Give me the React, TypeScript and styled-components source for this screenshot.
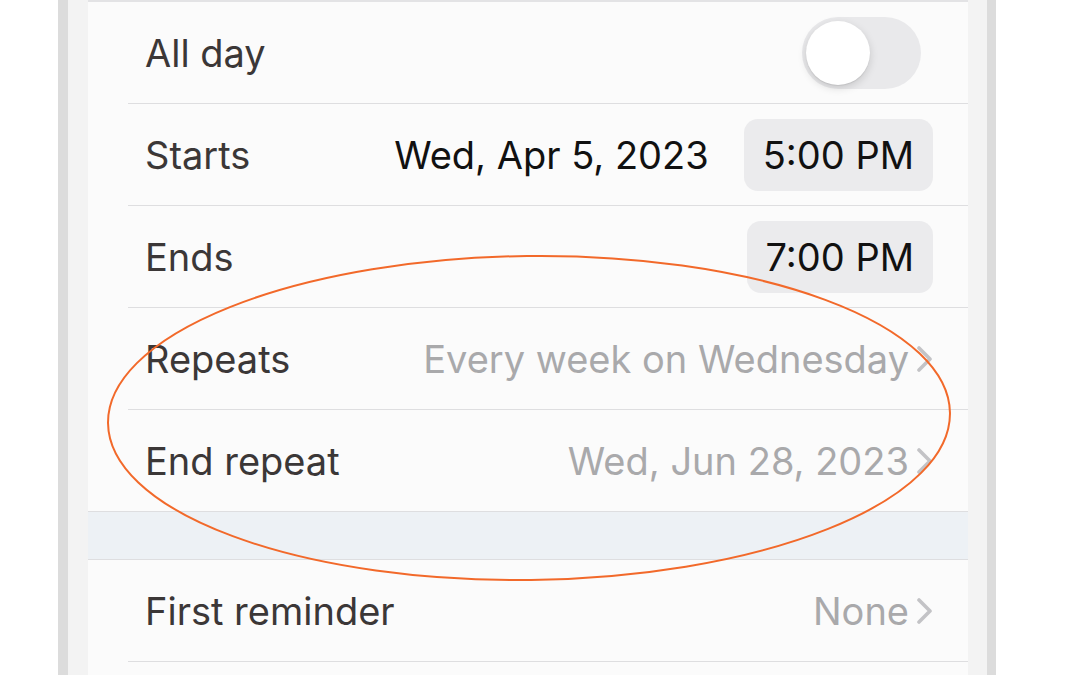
import React from "react";
import styled, { createGlobalStyle } from "styled-components";

const GlobalStyle = createGlobalStyle`
  html, body {
    margin: 0;
    padding: 0;
    background: #ffffff;
    overflow: hidden;
  }
  body {
    font-family: Inter, "Noto Sans", "Liberation Sans", sans-serif;
  }
`;

const Page = styled.div`
  position: relative;
  width: 1080px;
  height: 675px;
  overflow: hidden;
  background: #ffffff;
`;

const Phone = styled.div`
  margin-left: 58px;
  width: 938px;
  height: 675px;
  border-left: 10px solid #dcdcdc;
  border-right: 9px solid #dcdcdc;
  background: #f3f3f3;
  padding: 0 19px 0 20px;
  box-sizing: border-box;
`;

const Panel = styled.div`
  height: 100%;
  background: #fbfbfb;
  border-top: 2px solid #e3e3e5;
  display: flex;
  flex-direction: column;
`;

const Row = styled.div`
  height: 101px;
  flex: none;
  display: flex;
  align-items: center;
  justify-content: space-between;
  padding: 0 35px 0 57px;
  box-sizing: border-box;
`;

const Separator = styled.div`
  height: 1px;
  flex: none;
  margin-left: 40px;
  background: #dedee0;
`;

const Label = styled.span`
  font-size: 38px;
  color: #3b3737;
`;

const Right = styled.div`
  display: flex;
  align-items: center;
  gap: 35px;
`;

const DateText = styled.span`
  font-size: 38px;
  color: #111111;
`;

const Pill = styled.span`
  height: 72px;
  display: flex;
  align-items: center;
  padding: 0 19px;
  border-radius: 14px;
  background: #ebebed;
  font-size: 38px;
  color: #111111;
`;

const Value = styled.span`
  display: flex;
  align-items: center;
  gap: 7px;
  font-size: 38px;
  color: #a9a9ab;
`;

const Track = styled.div`
  width: 119px;
  height: 72px;
  margin-right: 12px;
  border-radius: 36px;
  background: #e9e9eb;
  padding: 4px;
  box-sizing: border-box;
  display: flex;
  align-items: center;
`;

const Knob = styled.div`
  width: 64px;
  height: 64px;
  border-radius: 50%;
  background: #ffffff;
  box-shadow: 0 3px 8px rgba(0, 0, 0, 0.15), 0 1px 1px rgba(0, 0, 0, 0.08);
`;

const SectionGap = styled.div`
  height: 47px;
  flex: none;
  background: #edf1f5;
  border-top: 1px solid #dedee0;
  border-bottom: 1px solid #dedee0;
`;

const Marker = styled.svg`
  position: absolute;
  left: 0;
  top: 0;
  pointer-events: none;
`;

const Chevron = () => (
  <svg width="17" height="26" viewBox="0 0 17 26">
    <path d="M3 2 L14 13 L3 24" fill="none" stroke="#c3c3c6" strokeWidth="3.6" strokeLinecap="round" strokeLinejoin="round" />
  </svg>
);

export default function App() {
  return (
    <Page>
      <GlobalStyle />
      <Phone>
        <Panel>
          <Row>
            <Label>All day</Label>
            <Track>
              <Knob />
            </Track>
          </Row>
          <Separator />
          <Row>
            <Label>Starts</Label>
            <Right>
              <DateText>Wed, Apr 5, 2023</DateText>
              <Pill>5:00 PM</Pill>
            </Right>
          </Row>
          <Separator />
          <Row>
            <Label>Ends</Label>
            <Pill>7:00 PM</Pill>
          </Row>
          <Separator />
          <Row>
            <Label>Repeats</Label>
            <Value>
              Every week on Wednesday
              <Chevron />
            </Value>
          </Row>
          <Separator />
          <Row>
            <Label>End repeat</Label>
            <Value>
              Wed, Jun 28, 2023
              <Chevron />
            </Value>
          </Row>
          <SectionGap />
          <Row>
            <Label>First reminder</Label>
            <Value>
              None
              <Chevron />
            </Value>
          </Row>
          <Separator />
          <Row />
        </Panel>
      </Phone>
      <Marker width="1080" height="675" viewBox="0 0 1080 675">
        <ellipse cx="529" cy="418" rx="421" ry="162" fill="none" stroke="#f2692a" strokeWidth="2" transform="rotate(-0.7 529 418)" />
      </Marker>
    </Page>
  );
}
